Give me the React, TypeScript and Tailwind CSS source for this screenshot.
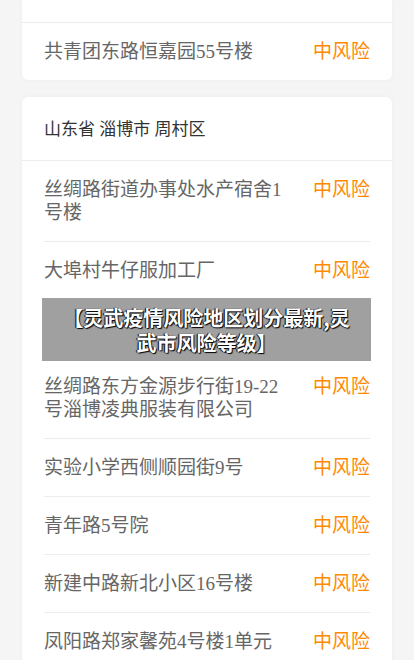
import React from "react";

type Area = { name: string; level: string };

const topCard: Area[] = [{ name: "共青团东路恒嘉园55号楼", level: "中风险" }];

// the third row sits under the title banner, its text is not visible
const zhoucun: (Area | null)[] = [
  { name: "丝绸路街道办事处水产宿舍1号楼", level: "中风险" },
  { name: "大埠村牛仔服加工厂", level: "中风险" },
  null,
  { name: "丝绸路东方金源步行街19-22号淄博凌典服装有限公司", level: "中风险" },
  { name: "实验小学西侧顺园街9号", level: "中风险" },
  { name: "青年路5号院", level: "中风险" },
  { name: "新建中路新北小区16号楼", level: "中风险" },
  { name: "凤阳路郑家馨苑4号楼1单元", level: "中风险" },
];

function Row({ item }: { item: Area | null }) {
  if (!item) return <div className="h-[58px]" />;
  return (
    <div className="flex items-start justify-between gap-6 py-[17px] text-[19px] leading-[23px]">
      <p className="text-[#666]">{item.name}</p>
      <span className="shrink-0 text-[#ff8a00]">{item.level}</span>
    </div>
  );
}

export default function App() {
  return (
    <div
      className="relative min-h-[660px] overflow-hidden bg-[#f5f5f5] px-[22px]"
      style={{ fontFamily: '"Liberation Serif", "Noto Sans CJK SC", serif' }}
    >
      {/* tail of previous province card */}
      <div className="rounded-b-md bg-white shadow-[0_0_4px_rgba(0,0,0,0.04)]">
        <div className="h-[23px] border-b border-[#ececec]" />
        <div className="divide-y divide-[#ececec] px-[22px]">
          {topCard.map((a) => (
            <Row key={a.name} item={a} />
          ))}
        </div>
      </div>

      <div className="mt-[17px] rounded-md bg-white shadow-[0_0_4px_rgba(0,0,0,0.04)]">
        <div className="border-b border-[#ececec] px-[22px] pt-[21px] pb-[19px] text-[17px] leading-[23px] text-[#333]">
          山东省 淄博市 周村区
        </div>
        <div className="divide-y divide-[#ececec] px-[22px]">
          {zhoucun.map((a, i) => (
            <Row key={i} item={a} />
          ))}
        </div>
      </div>

      {/* title watermark over the list */}
      <div
        className="absolute left-[42px] top-[298px] flex h-[63px] w-[329px] items-center justify-center bg-[#a0a0a0] px-3 text-center text-[20px] font-bold leading-[25px] text-white [text-shadow:1px_1px_1px_#000,-1px_0_1px_#000]"
        style={{ fontFamily: '"Noto Sans CJK SC", sans-serif' }}
      >
        【灵武疫情风险地区划分最新,灵武市风险等级】
      </div>
    </div>
  );
}
